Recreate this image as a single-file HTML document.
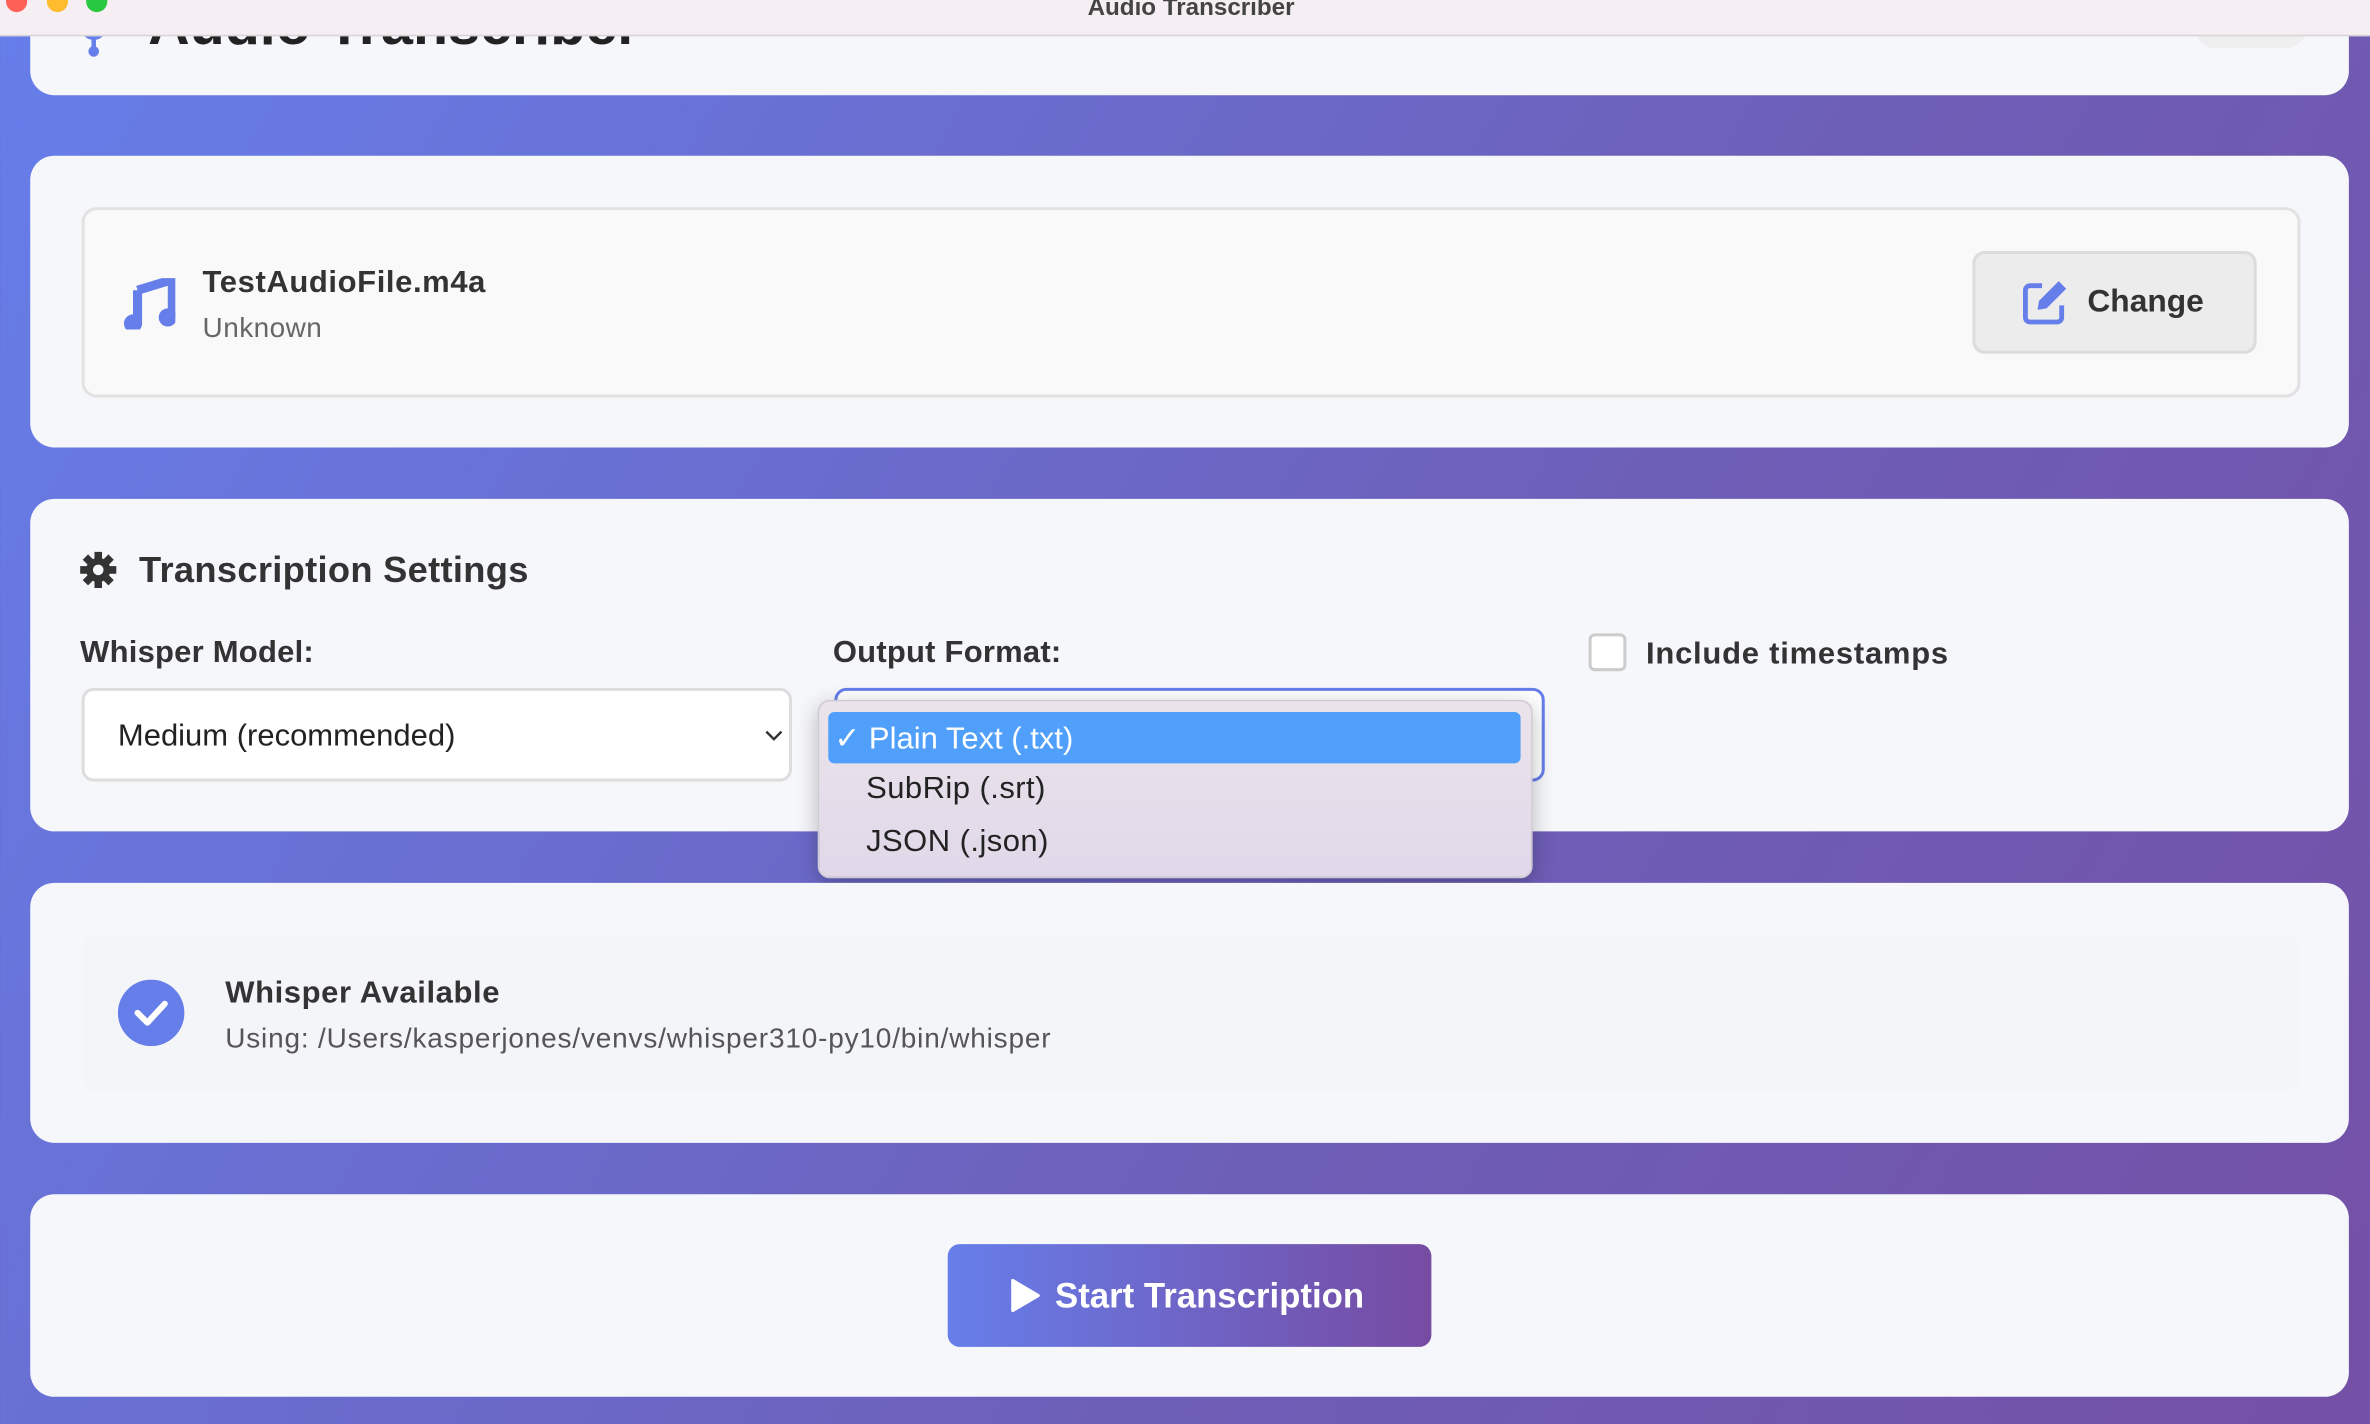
<!DOCTYPE html>
<html><head><meta charset="utf-8"><style>
*{box-sizing:border-box;margin:0;padding:0}
html,body{width:2370px;height:1424px;overflow:hidden}
body{font-family:"Liberation Sans",sans-serif;background:linear-gradient(120deg,#667eea 0%,#6d5fb8 60%,#7450a6 100%)}
#w{position:absolute;left:0;top:0;width:1568px;height:942px;transform:scale(1.5115,1.5117);transform-origin:0 0}
.a{position:absolute}
.card{position:absolute;left:20px;width:1534px;background:#f6f7fb;border-radius:16px}
.lbl{position:absolute;font-weight:bold;font-size:20.5px;color:#333;letter-spacing:.15px}
.sel{position:absolute;background:#fff;border:2px solid #ddd;border-radius:8px;height:62px;width:470px;font-size:20.5px;color:#222;padding:18px 0 0 22px}
</style></head><body><div id="w">
<div class="card" style="top:-20px;height:83px"></div>
<div class="a" style="left:98px;top:-4px;font-size:38px;font-weight:bold;color:#222">Audio Transcriber</div>
<svg class="a" style="left:52px;top:14px" width="20" height="24"><path d="M3 4a7 7 0 0 0 14 0" stroke="#667eea" stroke-width="3" fill="none"/><rect x="8.5" y="10" width="3" height="8" fill="#667eea"/><circle cx="10" cy="20" r="3.5" fill="#667eea"/></svg>
<div class="a" style="left:1452px;top:-10px;width:74px;height:42px;border-radius:14px;background:#efefef"></div>
<div class="a" style="left:0;top:0;width:1568px;height:24px;background:#f5eff3;border-bottom:1px solid #d6d3d6"></div>
<div class="a" style="left:4px;top:-6px;width:14px;height:14px;border-radius:50%;background:#fe5f57"></div>
<div class="a" style="left:31px;top:-6px;width:14px;height:14px;border-radius:50%;background:#febc2e"></div>
<div class="a" style="left:57px;top:-6px;width:14px;height:14px;border-radius:50%;background:#28c840"></div>
<div class="a" style="left:4px;width:1568px;top:-3px;text-align:center;font-size:16px;font-weight:bold;color:#444">Audio Transcriber</div>

<div class="card" style="top:103px;height:193px"></div>
<div class="a" style="left:54px;top:137px;width:1468px;height:126px;border:2px solid #e2e2e2;border-radius:10px;background:#f9f9f9"></div>
<svg class="a" style="left:80px;top:184px" width="36" height="34" viewBox="0 0 36 34"><path d="M11 8 L34 1 L34 26 M11 8 L11 30" stroke="#667eea" stroke-width="6" fill="none" stroke-linejoin="round"/><circle cx="8" cy="30" r="6" fill="#667eea"/><circle cx="31" cy="26" r="6" fill="#667eea"/></svg>
<div class="a" style="left:134px;top:175px;font-size:20.5px;font-weight:bold;color:#333;letter-spacing:.4px">TestAudioFile.m4a</div>
<div class="a" style="left:134px;top:206px;font-size:18.5px;color:#666;letter-spacing:.3px">Unknown</div>
<div class="a" style="left:1305px;top:166px;width:188px;height:68px;background:#ececec;border:2px solid #dcdcdc;border-radius:8px"></div>
<svg class="a" style="left:1337px;top:184px" width="32" height="32" viewBox="0 0 32 32"><path d="M14 5 H6 a3 3 0 0 0 -3 3 V26 a3 3 0 0 0 3 3 H24 a3 3 0 0 0 3 -3 V18" stroke="#667eea" stroke-width="3.2" fill="none"/><path d="M25 2 L30 7 L17 20 L11 21 L12 15 Z" fill="#667eea"/></svg>
<div class="a" style="left:1381px;top:188px;font-size:21px;font-weight:bold;color:#333">Change</div>

<div class="card" style="top:330px;height:220px"></div>
<svg class="a" style="left:53px;top:365px" width="24" height="24" viewBox="0 0 24 24"><circle cx="12" cy="12" r="8" fill="#333"/><g stroke="#333" stroke-width="5"><path d="M12 0V24M0 12H24M3.5 3.5L20.5 20.5M20.5 3.5L3.5 20.5"/></g><circle cx="12" cy="12" r="3.5" fill="#f6f7fb"/></svg>
<div class="a" style="left:92px;top:364px;font-size:24px;font-weight:bold;color:#333;letter-spacing:.2px">Transcription Settings</div>
<div class="lbl" style="left:53px;top:420px">Whisper Model:</div>
<div class="lbl" style="left:551px;top:420px">Output Format:</div>
<div class="a" style="left:1051px;top:419px;width:25px;height:25px;border:2px solid #ccc;border-radius:4px;background:#fff"></div>
<div class="lbl" style="left:1089px;top:421px;letter-spacing:.5px">Include timestamps</div>
<div class="sel" style="left:54px;top:455px">Medium (recommended)<svg class="a" style="left:450px;top:26px" width="12" height="8"><path d="M1 1L6 6L11 1" stroke="#333" stroke-width="1.6" fill="none"/></svg></div>
<div class="sel" style="left:552px;top:455px;border-color:#667eea"></div>
<div class="a" style="left:541px;top:463px;width:473px;height:118px;border-radius:8px;background:linear-gradient(#ebe4ea,#e0d8e9);box-shadow:0 4px 14px rgba(0,0,0,.25);border:1px solid #cfc9d3"></div>
<div class="a" style="left:548px;top:471px;width:458px;height:34px;border-radius:4px;background:#4f9ffb"></div>
<div class="a" style="left:552px;top:476px;font-size:20.5px;color:#fff">✓ Plain Text (.txt)</div>
<div class="a" style="left:573px;top:510px;font-size:20.5px;color:#222;letter-spacing:.3px">SubRip (.srt)</div>
<div class="a" style="left:573px;top:545px;font-size:20.5px;color:#222;letter-spacing:.3px">JSON (.json)</div>

<div class="card" style="top:584px;height:172px"></div>
<div class="a" style="left:54px;top:618px;width:1468px;height:104px;border-radius:10px;background:#f4f5f9"></div>
<svg class="a" style="left:78px;top:648px" width="44" height="44"><circle cx="22" cy="22" r="22" fill="#667eea"/><path d="M13 22L19.5 28.5L31 16" stroke="#fff" stroke-width="4" fill="none" stroke-linecap="round" stroke-linejoin="round"/></svg>
<div class="a" style="left:149px;top:645px;font-size:20.5px;font-weight:bold;color:#333;letter-spacing:.4px">Whisper Available</div>
<div class="a" style="left:149px;top:676px;font-size:18.5px;color:#555;letter-spacing:.55px">Using: /Users/kasperjones/venvs/whisper310-py10/bin/whisper</div>

<div class="card" style="top:790px;height:134px"></div>
<div class="a" style="left:627px;top:823px;width:320px;height:68px;border-radius:8px;background:linear-gradient(90deg,#667eea,#764ba2)"></div>
<svg class="a" style="left:668px;top:846px" width="20" height="22"><path d="M2 1L19 11L2 21Z" fill="#fff" stroke="#fff" stroke-width="2" stroke-linejoin="round"/></svg>
<div class="a" style="left:698px;top:844px;font-size:23px;font-weight:bold;color:#fff">Start Transcription</div>
</div></body></html>
